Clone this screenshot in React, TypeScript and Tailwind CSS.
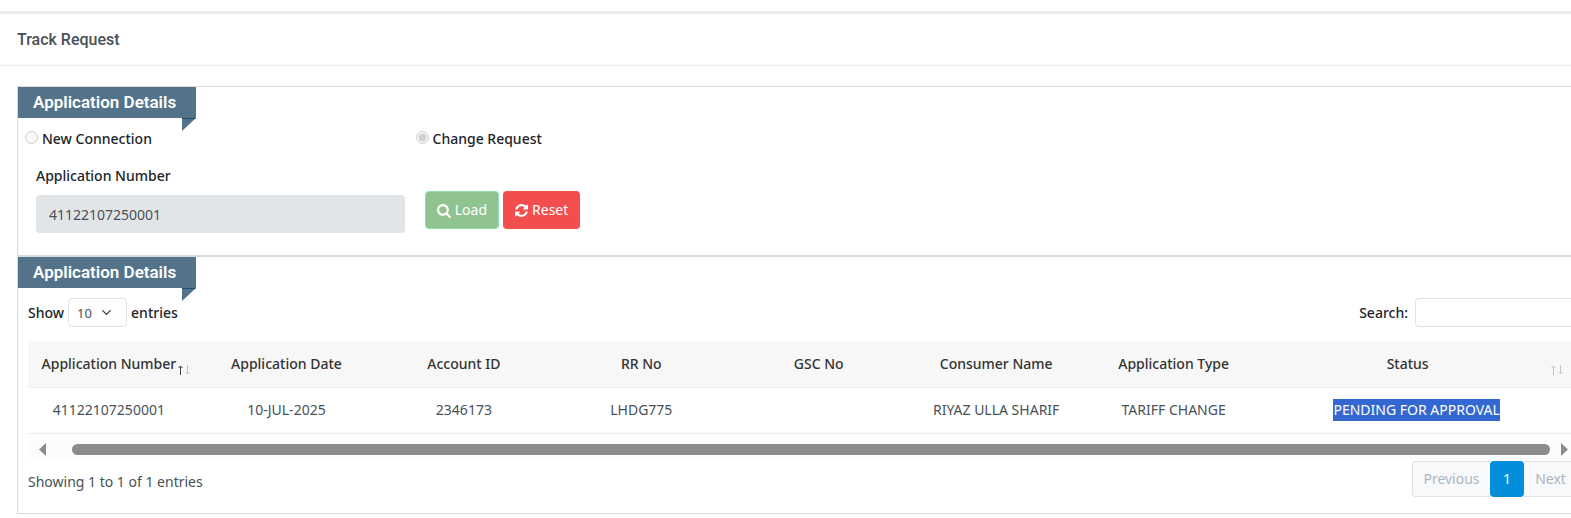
import { ReactNode } from "react"
import { ChevronDown } from "lucide-react"
import clsx from "clsx"

interface Application {
    applicationNumber: string
    applicationDate: string
    accountId: string
    rrNo: string
    gscNo: string
    consumerName: string
    applicationType: string
    status: string
}

const applications: Application[] = [
    {
        applicationNumber: "41122107250001",
        applicationDate: "10-JUL-2025",
        accountId: "2346173",
        rrNo: "LHDG775",
        gscNo: "",
        consumerName: "RIYAZ ULLA SHARIF",
        applicationType: "TARIFF CHANGE",
        status: "PENDING FOR APPROVAL",
    },
]

const columns = [
    "Application Number",
    "Application Date",
    "Account ID",
    "RR No",
    "GSC No",
    "Consumer Name",
    "Application Type",
    "Status",
]

function SearchIcon() {
    return (
        <svg viewBox="0 0 1664 1792" className="h-[15px] w-[14px] fill-current" aria-hidden="true">
            <path d="M1152 832q0-185-131.5-316.5T704 384 387.5 515.5 256 832t131.5 316.5T704 1280t316.5-131.5T1152 832zm512 832q0 52-38 90t-90 38q-54 0-90-38l-343-342q-179 124-399 124-143 0-273.5-55.5t-225-150-150-225T0 832t55.5-273.5 150-225 225-150T704 128t273.5 55.5 225 150 150 225T1408 832q0 220-124 399l343 343q37 37 37 90z" />
        </svg>
    )
}

function RefreshIcon() {
    return (
        <svg viewBox="0 0 1536 1792" className="h-[15px] w-[13px] fill-current" aria-hidden="true">
            <path d="M1511 1056q0 5-1 7-64 268-268 434.500T764 1664q-146 0-282.500-55T238 1452l-129 129q-19 19-45 19t-45-19-19-45v-448q0-26 19-45t45-19h448q26 0 45 19t19 45-19 45l-137 137q71 66 161 102t187 36q134 0 250-65t186-179q11-17 53-117 8-23 30-23h192q13 0 22.500 9.500t9.500 22.500zm25-800v448q0 26-19 45t-45 19h-448q-26 0-45-19t-19-45 19-45l138-138Q969 384 768 384q-134 0-250 65T332 628q-11 17-53 117-8 23-30 23H50q-13 0-22.500-9.500T18 736v-7q65-268 270-434.500T768 128q146 0 284 55.500T1297 339l130-129q19-19 45-19t45 19 19 45z" />
        </svg>
    )
}

function SortArrows({ ascending = false }: { ascending?: boolean }) {
    return (
        <svg viewBox="0 0 12 10" className="absolute right-2 bottom-3 h-[10px] w-3" fill="none" aria-hidden="true">
            <path d="M2.500 10V1M0.500 3l2-2 2 2" stroke={ascending ? "#444" : "#c4c4c4"} />
            <path d="M9.500 0v9M7.500 7l2 2 2-2" stroke="#c4c4c4" />
        </svg>
    )
}

function Panel({ title, children }: { title: string; children: ReactNode }) {
    return (
        <section className="border border-r-0 border-[#d9dada]">
            <div className="relative w-[178px] bg-[#52738a]">
                <h2 className="pl-[15px] font-[Roboto] text-[17px] leading-[31px] font-semibold text-white">{title}</h2>
                <svg viewBox="0 0 14 13" className="absolute top-full right-0 h-[13px] w-[14px]" aria-hidden="true">
                    <path d="M0 0h14L0 13z" fill="#52738a" />
                    <path d="M0 0h14l-1 1H0z" fill="#254b66" />
                </svg>
            </div>
            {children}
        </section>
    )
}

function RequestForm() {
    return (
        <form className="pt-2 pb-[22px]" onSubmit={(e) => e.preventDefault()}>
            <div className="grid grid-cols-4 gap-x-4 pl-[7px] font-medium text-[#212529]">
                <label className="flex h-[26px] items-center gap-1">
                    <input type="radio" name="requestType" disabled className="mb-1 h-[13px] w-[13px]" />
                    New Connection
                </label>
                <label className="flex h-[26px] items-center gap-1">
                    <input type="radio" name="requestType" disabled defaultChecked className="mb-1 h-[13px] w-[13px]" />
                    Change Request
                </label>
            </div>
            <div className="mt-[13px] grid grid-cols-4 items-end pl-[18px]">
                <div className="pr-[15px]">
                    <label htmlFor="applicationNumber" className="block font-medium text-[#212529]">
                        Application Number
                    </label>
                    <input
                        id="applicationNumber"
                        defaultValue="41122107250001"
                        disabled
                        className="mt-2 block h-[38px] w-full rounded bg-[#e1e5e8] px-[13px] text-[#495057]"
                    />
                </div>
                <div className="mb-1 flex gap-1 pl-[5px] text-white">
                    <button type="button" disabled className="flex h-[38px] items-center gap-1 rounded border border-[#8be0ad] bg-[#8fc38f] px-[11px]">
                        <SearchIcon />
                        Load
                    </button>
                    <button type="button" className="flex h-[38px] items-center gap-1 rounded bg-[#f34e4e] px-3">
                        <RefreshIcon />
                        Reset
                    </button>
                </div>
            </div>
        </form>
    )
}

function ApplicationsTable() {
    return (
        <table className="w-full table-fixed text-center">
            <colgroup>
                {columns.map((name, i) => (
                    <col key={name} className={clsx(i === 0 ? "w-[11%]" : i < 7 ? "w-[11.5%]" : "w-[20%]")} />
                ))}
            </colgroup>
            <thead className="bg-[#f7f7f7] text-[#333]">
                <tr className="h-[46px] border-b border-[#ededee]">
                    {columns.map((name, i) => (
                        <th
                            key={name}
                            className={clsx("relative font-medium whitespace-nowrap", i === 0 && "pr-2", i === 7 && "pr-[18px]")}
                        >
                            {name}
                            {(i === 0 || i === 7) && <SortArrows ascending={i === 0} />}
                        </th>
                    ))}
                </tr>
            </thead>
            <tbody>
                {applications.map((a) => (
                    <tr key={a.applicationNumber} className="h-[46px] border-b border-[#ededee]">
                        <td className="pr-2">{a.applicationNumber}</td>
                        <td>{a.applicationDate}</td>
                        <td>{a.accountId}</td>
                        <td>{a.rrNo}</td>
                        <td>{a.gscNo}</td>
                        <td className="whitespace-nowrap">{a.consumerName}</td>
                        <td className="whitespace-nowrap">{a.applicationType}</td>
                        <td>
                            <span className="inline-block bg-[#3367d1] leading-[22px] text-white">{a.status}</span>
                        </td>
                    </tr>
                ))}
            </tbody>
        </table>
    )
}

function ScrollTrack() {
    return (
        <div className="mt-[6px] flex h-[19px] items-center bg-[#fcfcfc] pr-[3px] pl-[11px]">
            <svg viewBox="0 0 7 13" className="h-[13px] w-[7px] fill-[#8b8b8b]" aria-hidden="true">
                <path d="M7 0v13L0 6.500z" />
            </svg>
            <div className="mr-[11px] ml-[26px] h-[11px] flex-1 rounded-full bg-[#8b8b8b]" />
            <svg viewBox="0 0 7 13" className="h-[13px] w-[7px] fill-[#8b8b8b]" aria-hidden="true">
                <path d="M0 0v13l7-6.500z" />
            </svg>
        </div>
    )
}

export default function App() {
    return (
        <main className="overflow-hidden bg-white font-['Noto_Sans',sans-serif] text-sm leading-[22px] text-[#495057]">
            <div className="mt-[11px] h-[3px] bg-[#ebedf0]" />
            <header className="border-b border-[#ededef] pl-[17px]">
                <h1 className="font-[Roboto] text-base leading-[51px] font-medium">Track Request</h1>
            </header>
            <div className="mt-5 mb-1 ml-[17px]">
                <Panel title="Application Details">
                    <RequestForm />
                </Panel>
                <Panel title="Application Details">
                    <div className="pb-4 pl-[10px]">
                        <div className="flex justify-between pt-[10px] pb-[14px] font-medium text-[#212529]">
                            <label className="flex items-center gap-1">
                                Show
                                <span className="relative font-normal text-[#495057]">
                                    <select className="h-[29px] w-[59px] appearance-none rounded border border-[#dfe2e6] bg-white pl-2 text-[13px]">
                                        <option>10</option>
                                    </select>
                                    <ChevronDown className="pointer-events-none absolute top-[7px] right-[13px] h-[15px] w-[15px] text-[#343a40]" />
                                </span>
                                entries
                            </label>
                            <label className="flex items-center gap-[7px]">
                                Search:
                                <input type="search" className="h-[29px] w-[156px] rounded-l border border-r-0 border-[#dfe2e6] bg-white px-2 font-normal" />
                            </label>
                        </div>
                        <ApplicationsTable />
                        <ScrollTrack />
                        <div className="flex items-center justify-between pt-[2px]">
                            <p className="mt-[6px]">Showing 1 to 1 of 1 entries</p>
                            <nav className="flex h-9" aria-label="Pages">
                                <button type="button" disabled className="w-[78px] rounded-l border border-r-0 border-[#dfe3e7] bg-[#f8f9fb] text-[#adb5bd]">
                                    Previous
                                </button>
                                <button type="button" className="w-[34px] rounded bg-[#038edc] text-white">
                                    1
                                </button>
                                <button type="button" disabled className="w-[47px] border-y border-[#dfe3e7] bg-[#f8f9fb] pl-[6px] text-[#adb5bd]">
                                    Next
                                </button>
                            </nav>
                        </div>
                    </div>
                </Panel>
            </div>
        </main>
    )
}
